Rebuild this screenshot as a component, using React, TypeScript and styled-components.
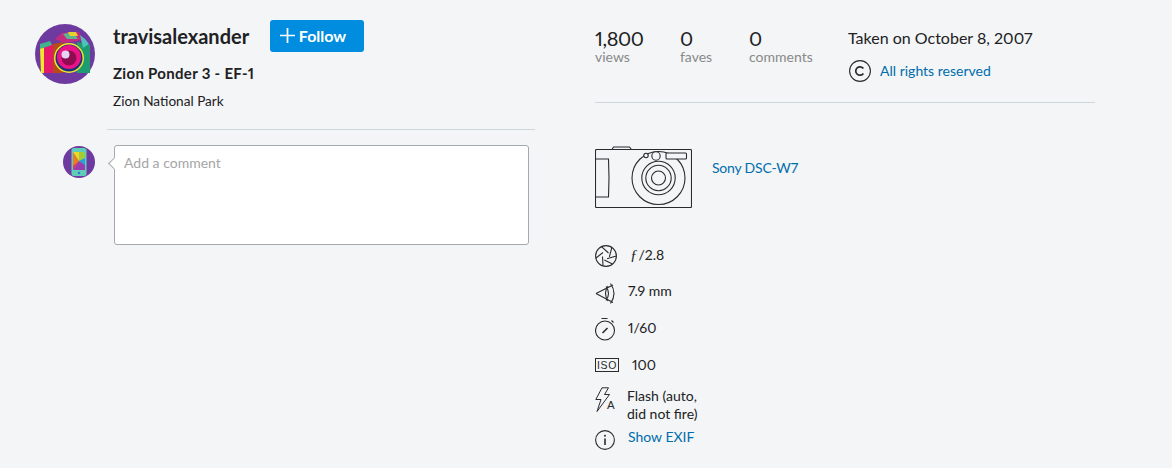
import React from "react";
import styled, { createGlobalStyle } from "styled-components";

const Global = createGlobalStyle`
  html, body { margin: 0; padding: 0; background: #f3f5f6; }
  body { font-family: Lato, "Open Sans", "Liberation Sans", sans-serif; color: #212124; font-variant-numeric: proportional-nums; }
`;
const Page = styled.div`
  width: 1172px; height: 468px; overflow: hidden; display: flex; background: #f3f5f6;
`;
const Left = styled.div`width: 595px; flex: none; display: flex; flex-direction: column;`;
const Right = styled.div`width: 500px; flex: none; display: flex; flex-direction: column;`;
const Owner = styled.div`display: flex; padding: 20px 0 0 35px; height: 129px; flex: none; box-sizing: border-box; gap: 18px;`;
const Avatar = styled.div`width: 60px; height: 60px; margin-top: 4px; flex: none;`;
const OwnerText = styled.div`display: flex; flex-direction: column;`;
const NameRow = styled.div`display: flex; align-items: center; gap: 20px; height: 32px;`;
const Name = styled.div`font-size: 20px; font-weight: 700; width: 137px; white-space: nowrap; letter-spacing: 0; margin-bottom: 1px;`;
const Follow = styled.button`
  width: 94px; height: 32px; border: 0; border-radius: 3px; background: #008ddf; color: #fff;
  font: 700 16px Lato, sans-serif; display: flex; align-items: center; justify-content: center; gap: 4px; padding: 0 8px 2px 0;
`;
const Title = styled.div`font-size: 15px; font-weight: 700; line-height: 20px; margin-top: 11px; letter-spacing: 0.3px;`;
const Place = styled.div`font-size: 13.6px; line-height: 18px; margin-top: 9px;`;
const LeftRule = styled.div`height: 1px; flex: none; background: #cfd6d9; margin: 0 60px 0 107px;`;
const CommentRow = styled.div`display: flex; padding: 15px 0 0 63px; gap: 19px;`;
const SmallAvatar = styled.div`width: 32px; height: 32px; margin-top: 1px; flex: none;`;
const CommentBox = styled.div`
  position: relative; width: 415px; height: 100px; box-sizing: border-box; background: #fff;
  border: 1px solid #a5a9ad; border-radius: 3px; padding: 8px 9px; font-size: 14px; line-height: 18px; color: #a5a5a5;
  &::before {
    content: ""; position: absolute; left: -5px; top: 13px; width: 8px; height: 8px; background: #fff;
    border-left: 1px solid #a5a9ad; border-bottom: 1px solid #a5a9ad; transform: rotate(45deg);
  }
`;
const Stats = styled.div`display: flex; height: 102px; flex: none; padding-top: 28px; box-sizing: border-box;`;
const Stat = styled.div<{ $w: number }>`width: ${p => p.$w}px; flex: none;`;
const Num = styled.div`font-size: 20px; line-height: 21px; letter-spacing: -0.4px;`;
const Label = styled.div`font-size: 14px; line-height: 15px; color: #898989;`;
const Taken = styled.div`display: flex; flex-direction: column; margin-left: -1px;`;
const TakenText = styled.div`font-size: 16px; line-height: 18px; margin-top: 1px;`;
const Rights = styled.div`display: flex; align-items: center; gap: 9px; margin-top: 13px; margin-left: 1px;`;
const Link = styled.a<{ $tight?: boolean }>`color: #006dac; font-size: 14px; line-height: 18px; text-decoration: none; letter-spacing: ${p => (p.$tight ? "-0.2px" : "0")};`;
const RightRule = styled.div`height: 1px; flex: none; background: #cfd6d9;`;
const Gear = styled.div`display: flex; align-items: flex-start; gap: 20px; padding-top: 43px;`;
const GearName = styled.div`padding-top: 11px;`;
const Facts = styled.div`display: flex; flex-direction: column; margin-top: 29px;`;
const Fact = styled.div<{ $h: number; $gap: number }>`
  display: flex; align-items: center; height: ${p => p.$h}px; font-size: 14px; line-height: 18px;
  & > span, & > a { margin-left: ${p => p.$gap}px; }
`;
const IconBox = styled.div<{ $dy?: number }>`
  width: 24px; flex: none; display: flex; align-items: center; justify-content: flex-start;
  margin-top: ${p => (p.$dy ?? 0) * 2}px;
`;
const Ital = styled.i`font-family: "Liberation Serif", serif; font-size: 15px; margin-right: 1px;`;

const CamAvatar = () => (
  <svg width="60" height="60" viewBox="0 0 60 60">
    <circle cx="30" cy="30" r="30" fill="#6f3aa0" />
    <polygon points="5,22 6,49 18,49 18,20" fill="#e5196b" />
    <polygon points="5,24 9,24 9,49 6,49" fill="#f0e82a" />
    <polygon points="5,20 15,17 17,21 5,25" fill="#3fb58c" />
    <polygon points="18,20 28,18 28,49 18,49" fill="#b84a1a" />
    <polygon points="20,15 27,9 44,8 47,16 30,19" fill="#c7297f" />
    <polygon points="28,10 38,8 43,15 32,15" fill="#5db58f" />
    <polygon points="33,8 41,8 43,12 35,12" fill="#e8cf30" />
    <polygon points="42,18 55,21 55,49 42,49" fill="#1f9b70" />
    <polygon points="45,11 50,15 54,20 48,24" fill="#4fc1b8" />
    <circle cx="34" cy="34" r="15" fill="#f2e72a" />
    <circle cx="34" cy="34" r="13.500" fill="#19327e" />
    <circle cx="34" cy="33" r="12" fill="#ea1487" />
    <circle cx="34" cy="34" r="7.500" fill="#8f0b52" />
    <circle cx="30.500" cy="30.500" r="4" fill="#e4d4f2" />
  </svg>
);
const PhoneAvatar = () => (
  <svg width="32" height="32" viewBox="0 0 32 32">
    <circle cx="16" cy="16" r="16" fill="#6f3aa0" />
    <rect x="8.500" y="2" width="15" height="28" rx="2.500" fill="#5fcdb8" />
    <polygon points="10,6 16,6 16,15" fill="#ecd92a" />
    <polygon points="16,6 22,6 22,12 16,15" fill="#a3cc35" />
    <polygon points="22,12 22,19 16,15" fill="#2f9fd8" />
    <polygon points="22,19 22,24 10,24 16,15" fill="#9a3bb0" />
    <polygon points="10,6 16,15 10,22" fill="#ee7b25" />
    <polygon points="10,20 16,15 10,24" fill="#e8305f" />
    <circle cx="16" cy="27" r="1.200" fill="#3b6fd0" />
  </svg>
);
const Stroke = { fill: "none", stroke: "#2b2b2e", strokeWidth: 1.1 } as const;
const Copy = () => (
  <svg width="22" height="22" viewBox="0 0 22 22">
    <circle cx="11" cy="11" r="10.400" {...Stroke} />
    <path d="M14.400 8.600a4.200 4.200 0 1 0 0 4.800" fill="none" stroke="#2b2b2e" strokeWidth="1.700" />
  </svg>
);
const Camera = () => (
  <svg width="97" height="62" viewBox="0 0 97 62" {...Stroke}>
    <path d="M17 3.500l1.500-2.500h16l2 2.500" />
    <rect x=".5" y="3.500" width="96" height="58" rx="1" />
    <path d="M.5 13H13.500q1 19 0 38H.5" />
    <circle cx="63.500" cy="32" r="26.500" />
    <circle cx="61" cy="10" r="4.200" fill="#f3f5f6" />
    <circle cx="51" cy="9.500" r="2.200" fill="#f3f5f6" />
    <rect x="71" y="7" width="20.500" height="6" rx="1" fill="#f3f5f6" />
    <circle cx="63.500" cy="32" r="16.700" />
    <circle cx="63.500" cy="32" r="12.700" />
    <circle cx="63.500" cy="32" r="7" />
  </svg>
);
const Aperture = () => (
  <svg width="22" height="22" viewBox="0 0 22 22" {...Stroke}>
    <circle cx="11" cy="11" r="10.400" />
    <path d="M6.500 1.600L13.500 8M16.800 2.600L14.400 11.800M21.200 11L12 13.800M17.500 19L9.300 15M8 20.500L7.500 11.500M1 13L8 7.500" />
  </svg>
);
const Lens = () => (
  <svg width="21" height="22" viewBox="0 0 21 22" {...Stroke}>
    <path d="M1 11.500L18 3M1 11.500L18 20.500" />
    <path d="M15.500 1.500q7 10 0 20M11 4.500q5 7 0 14M13 4q-5 7.500 0 15" />
  </svg>
);
const Timer = () => (
  <svg width="21" height="24" viewBox="0 0 21 24" {...Stroke}>
    <path d="M6.500 1.500h6M16.500 3.500l2 2" />
    <circle cx="10" cy="13.500" r="9.500" />
    <path d="M7.500 16l5-5" strokeWidth="1.600" />
  </svg>
);
const Iso = () => (
  <svg width="24" height="14" viewBox="0 0 24 14">
    <rect x=".5" y=".5" width="23" height="13" fill="none" stroke="#2b2b2e" />
    <text x="12" y="10.700" textAnchor="middle" fontSize="10.500" fontFamily="Liberation Sans" letterSpacing=".7" fill="#2b2b2e">ISO</text>
  </svg>
);
const FlashA = () => (
  <svg width="20" height="26" viewBox="0 0 20 26">
    <path d="M7 .8h6.500L9.500 7.500h5L2 24.500l4-12H.8Z" fill="none" stroke="#2b2b2e" />
    <text x="12" y="22" fontSize="11.500" fontFamily="Liberation Sans" fill="#2b2b2e">A</text>
  </svg>
);
const Info = () => (
  <svg width="20" height="20" viewBox="0 0 20 20">
    <circle cx="10" cy="10" r="9.400" {...Stroke} />
    <path d="M10 8.500v6.500" stroke="#2b2b2e" strokeWidth="1.600" />
    <circle cx="10" cy="5.800" r="1" fill="#2b2b2e" />
  </svg>
);
const Plus = () => (
  <svg width="15" height="15" viewBox="0 0 15 15"><path d="M7.500 0v15M0 7.500h15" stroke="#fff" strokeWidth="1.700" /></svg>
);

export default function App() {
  return (
    <Page>
      <Global />
      <Left>
        <Owner>
          <Avatar><CamAvatar /></Avatar>
          <OwnerText>
            <NameRow>
              <Name>travisalexander</Name>
              <Follow><Plus />Follow</Follow>
            </NameRow>
            <Title>Zion Ponder 3 - EF-1</Title>
            <Place>Zion National Park</Place>
          </OwnerText>
        </Owner>
        <LeftRule />
        <CommentRow>
          <SmallAvatar><PhoneAvatar /></SmallAvatar>
          <CommentBox>Add a comment</CommentBox>
        </CommentRow>
      </Left>
      <Right>
        <Stats>
          <Stat $w={85}><Num>1,800</Num><Label>views</Label></Stat>
          <Stat $w={69}><Num>0</Num><Label>faves</Label></Stat>
          <Stat $w={100}><Num>0</Num><Label>comments</Label></Stat>
          <Taken>
            <TakenText>Taken on October 8, 2007</TakenText>
            <Rights><Copy /><Link>All rights reserved</Link></Rights>
          </Taken>
        </Stats>
        <RightRule />
        <Gear><Camera /><GearName><Link $tight>Sony DSC-W7</Link></GearName></Gear>
        <Facts>
          <Fact $h={35} $gap={11}><IconBox $dy={1}><Aperture /></IconBox><span><Ital>ƒ</Ital>/2.8</span></Fact>
          <Fact $h={37} $gap={9}><IconBox $dy={2.5}><Lens /></IconBox><span>7.9 mm</span></Fact>
          <Fact $h={37} $gap={9}><IconBox $dy={1.5}><Timer /></IconBox><span>1/60</span></Fact>
          <Fact $h={37} $gap={13}><IconBox><Iso /></IconBox><span>100</span></Fact>
          <Fact $h={43} $gap={8}><IconBox $dy={-5}><FlashA /></IconBox><span>Flash (auto,<br />did not fire)</span></Fact>
          <Fact $h={21} $gap={9}><IconBox $dy={3}><Info /></IconBox><Link>Show EXIF</Link></Fact>
        </Facts>
      </Right>
    </Page>
  );
}
